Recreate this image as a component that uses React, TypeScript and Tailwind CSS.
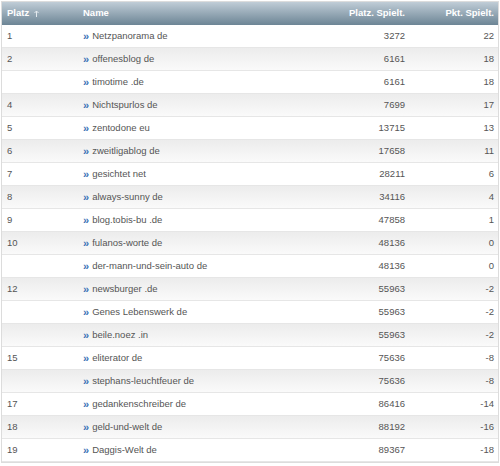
const ROWS: [string, string, number, number][] = [
  ['1', 'Netzpanorama de', 3272, 22],
  ['2', 'offenesblog de', 6161, 18],
  ['', 'timotime .de', 6161, 18],
  ['4', 'Nichtspurlos de', 7699, 17],
  ['5', 'zentodone eu', 13715, 13],
  ['6', 'zweitligablog de', 17658, 11],
  ['7', 'gesichtet net', 28211, 6],
  ['8', 'always-sunny de', 34116, 4],
  ['9', 'blog.tobis-bu .de', 47858, 1],
  ['10', 'fulanos-worte de', 48136, 0],
  ['', 'der-mann-und-sein-auto de', 48136, 0],
  ['12', 'newsburger .de', 55963, -2],
  ['', 'Genes Lebenswerk de', 55963, -2],
  ['', 'beile.noez .in', 55963, -2],
  ['15', 'eliterator de', 75636, -8],
  ['', 'stephans-leuchtfeuer de', 75636, -8],
  ['17', 'gedankenschreiber de', 86416, -14],
  ['18', 'geld-und-welt de', 88192, -16],
  ['19', 'Daggis-Welt de', 89367, -18],
]

const COLS = 'grid grid-cols-[78px_1fr_116px_85px]'

export default function App() {
  return (
    <div
      className="h-[466px] w-[500px] bg-white pl-px pt-px"
      style={{ fontFamily: '"Liberation Sans", Arial, sans-serif' }}
    >
      <div className="w-[498px] border border-[#dcdcdc]">
        <div
          className={`${COLS} h-[23px] items-center bg-gradient-to-b from-[#c0cdd7] to-[#6d8595] text-[9.5px] font-bold text-white`}
        >
          <div className="flex items-center gap-[5px] pl-[5px]">
            Platz
            <svg width="5" height="7" viewBox="0 0 5 7" fill="none" stroke="#e3e9ee" strokeWidth={1}>
              <path d="M2.5 7V1M0.5 3l2-2 2 2" />
            </svg>
          </div>
          <div className="pl-[3px]">Name</div>
          <div className="pr-[8px] text-right">Platz. Spielt.</div>
          <div className="pr-[4px] text-right">Pkt. Spielt.</div>
        </div>
        {ROWS.map(([place, name, games, points], i) => (
          <div
            key={name}
            className={`${COLS} h-[23px] items-center border-b border-[#e6e6e6] text-[9.5px] text-[#555] ${
              i % 2 === 1 ? 'bg-gradient-to-b from-[#ececec] to-[#fafafa]' : 'bg-white'
            }`}
          >
            <div className="pl-[5px]">{place}</div>
            <div className="flex items-center gap-[3px] pl-[3px]">
              <span className="text-[11px] font-bold leading-none text-[#3c72b6]">»</span>
              {name}
            </div>
            <div className="pr-[8px] text-right">{games}</div>
            <div className="pr-[4px] text-right">{points}</div>
          </div>
        ))}
      </div>
    </div>
  )
}
